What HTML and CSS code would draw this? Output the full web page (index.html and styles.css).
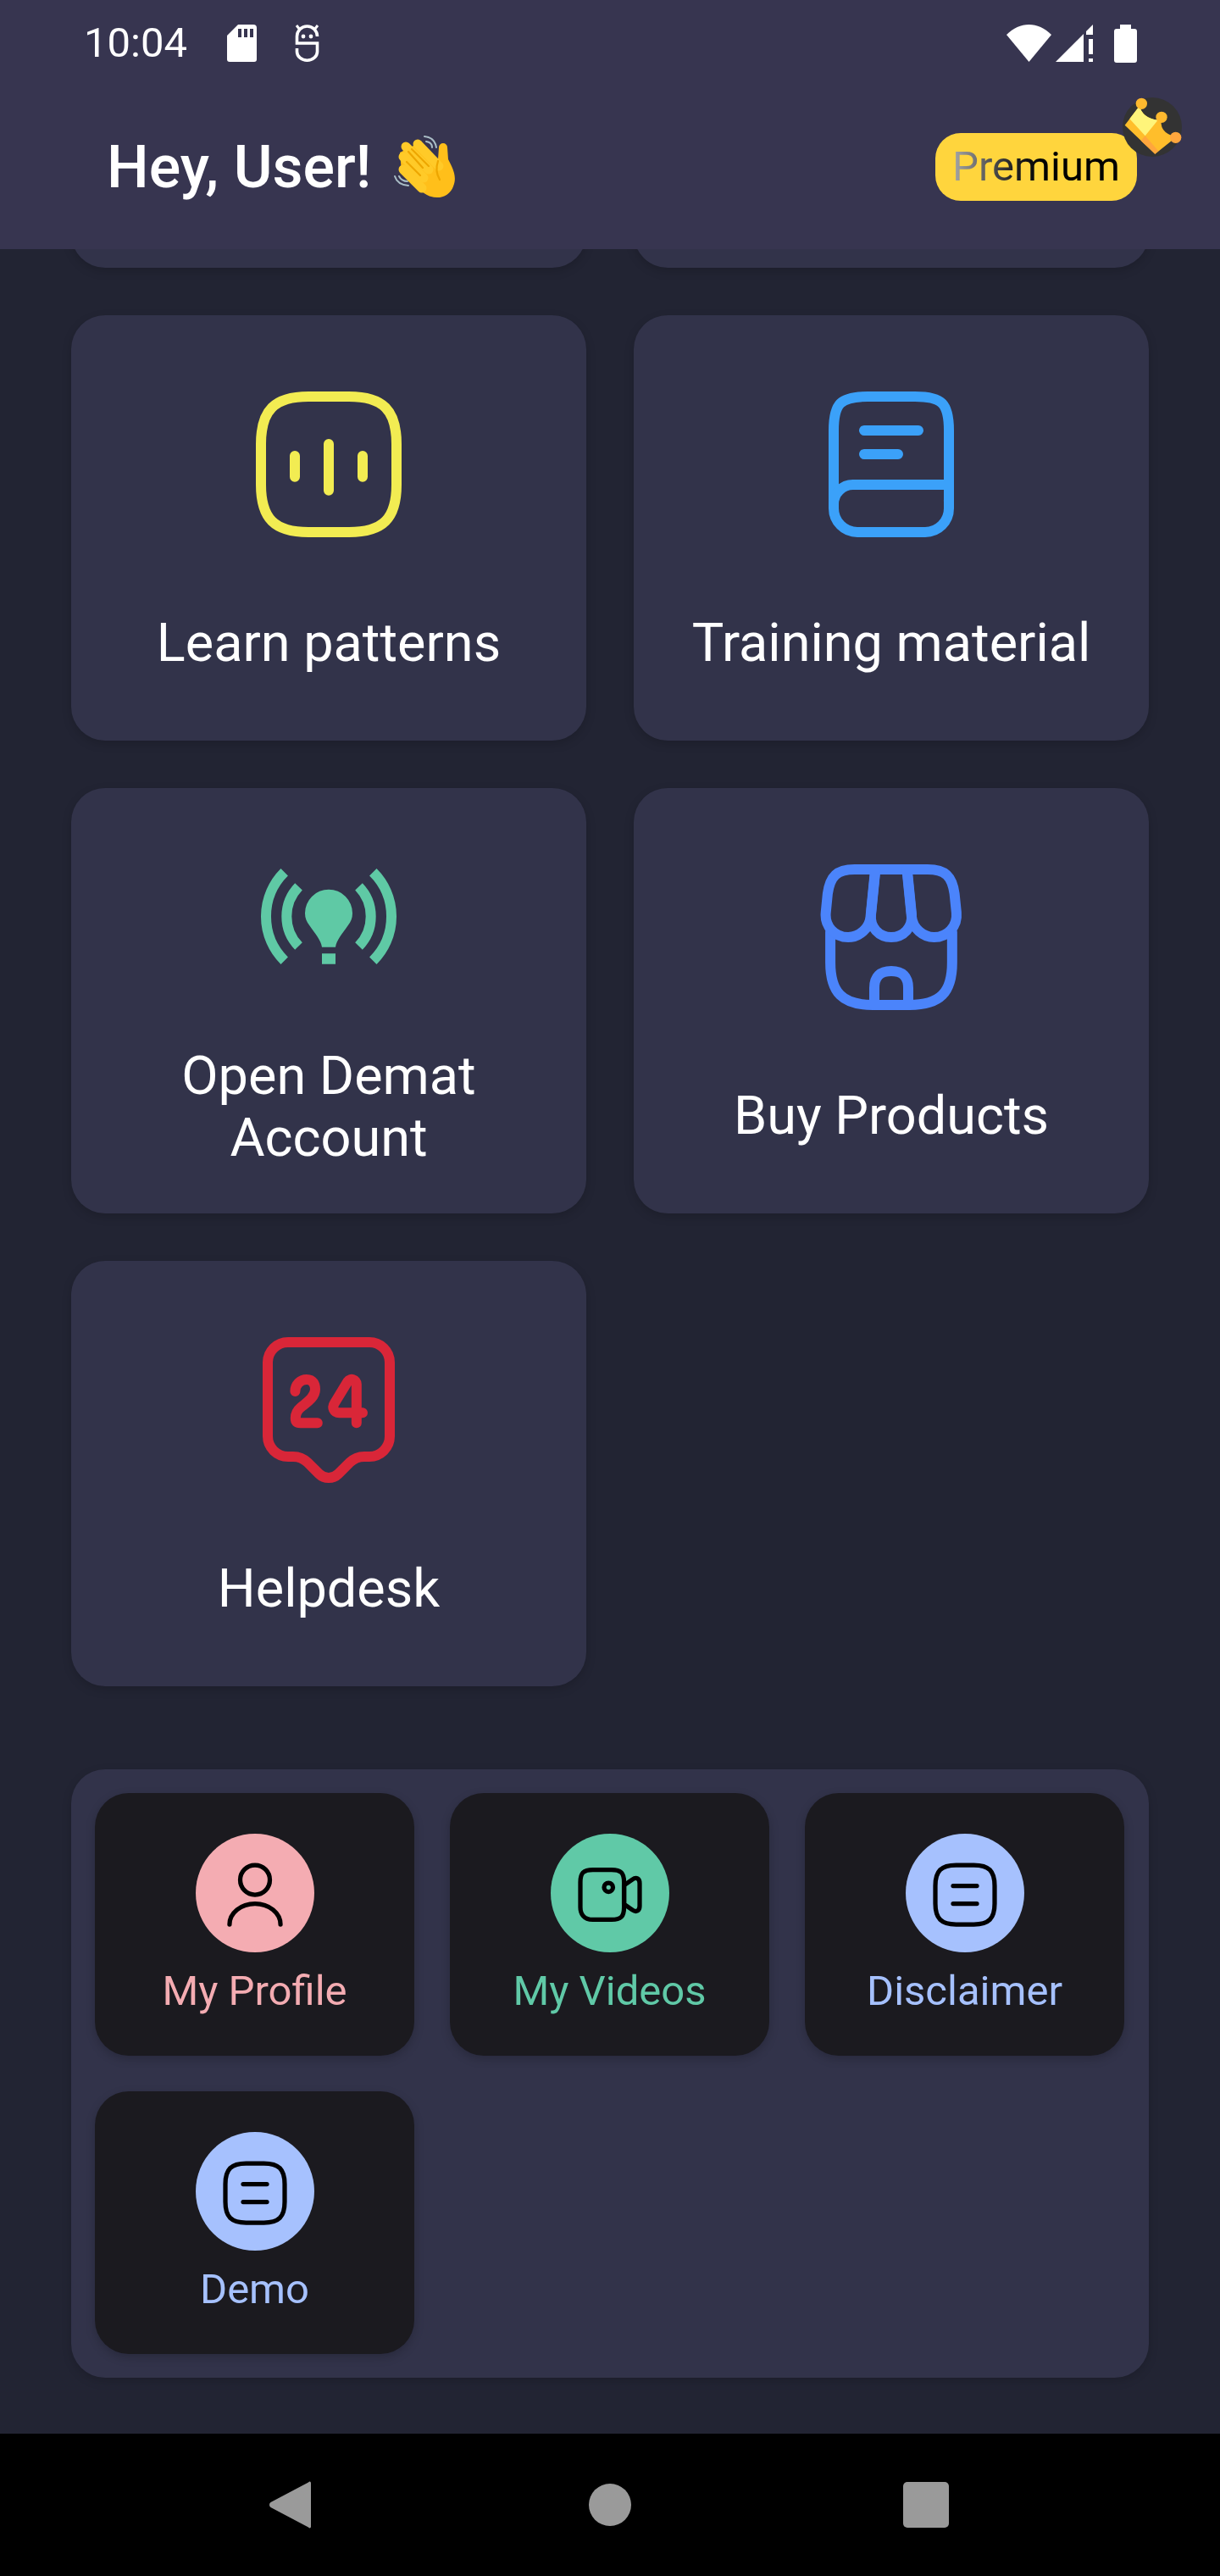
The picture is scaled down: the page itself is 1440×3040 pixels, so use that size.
FILE: index.html
```html
<!DOCTYPE html>
<html lang="en">
<head>
<meta charset="utf-8">
<title>Dashboard</title>
<link rel="stylesheet" href="styles.css">
</head>
<body>
<div class="screen">
  <header class="header">
    <div class="status">
      <div class="status-left">
        <span class="time">10:04</span>
        <svg class="st-sd" viewBox="0 0 35 44"><path d="M13 0H31a4 4 0 0 1 4 4V41a3 3 0 0 1-3 3H3a3 3 0 0 1-3-3V13z" fill="#fff"/><path d="M13 5h4v10h-4zM20 5h4v10h-4zM27 5h4v10h-4z" fill="#373550"/></svg>
        <svg class="st-bug" viewBox="0 0 31 44" fill="none" stroke="#fff" stroke-width="3.6"><path d="M27.5 14A12 12 0 0 0 3.5 14V22H27.5V32A12 10.2 0 0 1 3.5 32V28"/><path d="M3 1l4 5M28 1l-4 5" stroke-width="3"/><circle cx="11" cy="14" r="2.4" fill="#fff" stroke="none"/><circle cx="20" cy="14" r="2.4" fill="#fff" stroke="none"/></svg>
      </div>
      <div class="status-right">
        <svg class="st-wifi" viewBox="0 0 53 44"><path d="M0 12C8 4 17 0 26.5 0S45 4 53 12L26.5 44Z" fill="#fff"/></svg>
        <svg class="st-signal" viewBox="0 0 44 44"><path d="M0 44L33 11V44ZM36 8L44 0V12H36ZM39 17h5v18h-5zM39 40h5v4h-5z" fill="#fff"/></svg>
        <svg class="st-batt" viewBox="0 0 27 45"><path d="M7 0H20V5H24a3 3 0 0 1 3 3V42a3 3 0 0 1-3 3H3a3 3 0 0 1-3-3V8a3 3 0 0 1 3-3H7Z" fill="#fff"/></svg>
      </div>
    </div>
    <div class="hello">
      <div class="greet">
        <h1 class="greet-text">Hey, User!</h1>
        <svg class="wave" viewBox="44 40 76 76" fill="none">
          <g stroke="#A9BDC6" stroke-width="2" stroke-linecap="round">
            <path d="M81 41Q93 42 95 54"/><path d="M83 47Q90 48 90 54"/>
            <path d="M46 88Q49 98 62 99"/><path d="M51 88Q54 94 61 94"/>
          </g>
          <path d="M54 83L78 106C92 118 110 114 115 100C120 88 114 78 109 68L108 54A5 5 0 0 0 98 54L97 68L76 48L52 60Z" fill="#FFBF1A"/>
          <g stroke="#FFCA28" stroke-width="11" stroke-linecap="round">
            <path d="M59 53L86 80"/><path d="M73 50L98 76"/><path d="M56 65L80 90"/><path d="M56 80L78 102"/>
          </g>
          <g stroke="#EDA600" stroke-width="2.2" stroke-linecap="round">
            <path d="M66 56L86 76"/><path d="M60 71L76 87"/><path d="M62 59L79 78"/><path d="M97 70Q93 82 99 92"/>
          </g>
        </svg>
      </div>
      <div class="badge">
        <span class="badge-text">Premium</span>
        <svg class="crown" viewBox="735 42 210 210">
          <circle cx="840" cy="147" r="105" fill="#333"/>
          <path d="M743 140L795 72Q805 115 860 122L875 110Q858 165 925 182L850 242Z" fill="#FFBE2B"/>
          <path d="M760 118L795 72Q805 115 860 122L815 178Z" fill="#FFF47A"/>
          <path d="M815 178L800 195L850 242L862 232Z" fill="#FFA63D"/>
          <circle cx="802" cy="64" r="20" fill="#FFB92E"/>
          <circle cx="873" cy="112" r="20" fill="#FFB92E"/>
          <circle cx="923" cy="184" r="20" fill="#FFA63D"/>
        </svg>
      </div>
    </div>
  </header>

  <main class="main">
    <div class="grid">
      <div class="card card-stub"></div>
      <div class="card card-stub"></div>

      <a class="card">
        <svg class="ic" viewBox="0 0 24 24" fill="none" stroke="#F2EC52" stroke-width="1.5" stroke-linecap="round" stroke-linejoin="round"><path d="M9 22h6c5 0 7-2 7-7V9c0-5-2-7-7-7H9C4 2 2 4 2 9v6c0 5 2 7 7 7z"/><path d="M7 10.75v3.1M12 9v6.85M17 10.75v3.1"/></svg>
        <span class="card-label">Learn patterns</span>
      </a>
      <a class="card">
        <svg class="ic" viewBox="0 0 24 24" fill="none" stroke="#3BA1F9" stroke-width="1.5" stroke-linecap="round" stroke-linejoin="round"><path d="M3.5 18V7c0-4 1-5 5-5h7c4 0 5 1 5 5v10c0 .14 0 .28-.01.42"/><path d="M6.35 15H20.5v3.5c0 1.93-1.57 3.5-3.5 3.5H7c-1.93 0-3.5-1.57-3.5-3.5v-.65C3.5 16.28 4.78 15 6.35 15z"/><path d="M8 7h8M8 10.5h5"/></svg>
        <span class="card-label">Training material</span>
      </a>

      <a class="card">
        <svg class="ic ic-short" viewBox="12 -18 192 172" fill="none" stroke="#5FC9A5" stroke-width="12"><path d="M55.7 28.3A73.6 73.6 0 0 0 55.7 132.7M72.5 45.3A50.5 50.5 0 0 0 72.5 115.5M160.3 28.3A73.6 73.6 0 0 1 160.3 132.7M143.5 45.3A50.5 50.5 0 0 1 143.5 115.5"/><path d="M100 116.7c-1-8-8-16-15-26-3-4-5-8-5-14a28 28 0 0 1 56 0c0 6-2 10-5 14-7 10-14 18-15 26zM100 124.3h16v12.4h-16z" fill="#5FC9A5" stroke="none"/></svg>
        <span class="card-label">Open Demat Account</span>
      </a>
      <a class="card">
        <svg class="ic" viewBox="0 0 24 24" fill="none" stroke="#4B84FB" stroke-width="1.5" stroke-linecap="round" stroke-linejoin="round"><path d="M3.01 11.22v4.49C3.01 20.2 4.81 22 9.3 22h5.39c4.49 0 6.29-1.8 6.29-6.29v-4.49"/><path d="M12 12c1.83 0 3.18-1.49 3-3.32L14.34 2H9.67L9 8.68C8.82 10.51 10.17 12 12 12z"/><path d="M18.31 12c2.02 0 3.5-1.64 3.3-3.65l-.28-2.75C20.97 3 19.97 2 17.35 2h-3.05l.7 7.01c.17 1.65 1.66 2.99 3.31 2.99z"/><path d="M5.64 12c1.65 0 3.14-1.34 3.3-2.99l.22-2.21.48-4.8H6.59C3.97 2 2.97 3 2.61 5.6l-.27 2.75C2.14 10.36 3.62 12 5.64 12z"/><path d="M12 17c-1.67 0-2.5.83-2.5 2.5V22h5v-2.5c0-1.67-.83-2.5-2.5-2.5z"/></svg>
        <span class="card-label">Buy Products</span>
      </a>

      <a class="card">
        <svg class="ic" viewBox="0 0 24 24" fill="none" stroke="#D92638" stroke-width="1.5" stroke-linecap="round" stroke-linejoin="round"><path d="M18 18.86h-.76c-.8 0-1.56.31-2.12.87l-1.71 1.69c-.78.77-2.05.77-2.83 0l-1.71-1.69c-.56-.56-1.33-.87-2.12-.87H6c-1.66 0-3-1.33-3-2.97V4.98C3 3.34 4.34 2 6 2h12c1.66 0 3 1.34 3 2.98v10.91c0 1.64-1.34 2.97-3 2.97z"/><path d="M7.05 9.25C7.05 8.25 7.8 7.5 8.75 7.5C9.7 7.5 10 8.2 10 8.95C10 10.2 8.6 11 7.9 11.6C7.3 12.1 7.1 12.5 7.1 13.2C7.1 13.7 7.3 13.9 7.8 13.9H10.35"/><path d="M16.1 13.9V8.2c0-.7-.9-1-1.3-.4L12.85 11c-.4.65-.1 1.4.7 1.4H17"/></svg>
        <span class="card-label">Helpdesk</span>
      </a>
    </div>

    <section class="panel">
      <a class="tile tile-pink">
        <span class="disc"><svg class="ic-sm" viewBox="0 0 24 24" fill="none" stroke="#000" stroke-width="1.5" stroke-linecap="round" stroke-linejoin="round"><circle cx="12" cy="7" r="5"/><path d="M20.59 22c0-3.87-3.85-7-8.59-7s-8.59 3.13-8.59 7"/></svg></span>
        <span class="tile-label">My Profile</span>
      </a>
      <a class="tile tile-green">
        <span class="disc"><svg class="ic-sm" viewBox="0 0 24 24" fill="none" stroke="#000" stroke-width="1.5" stroke-linecap="round" stroke-linejoin="round"><path d="M12.53 20.42H6.21c-3.16 0-4.21-2.1-4.21-4.21V7.79c0-3.16 1.05-4.21 4.21-4.21h6.32c3.16 0 4.21 1.05 4.21 4.21v8.42c0 3.16-1.06 4.21-4.21 4.21z"/><path d="M19.52 17.1l-2.78-1.95V8.84l2.78-1.95c1.36-.95 2.48-.37 2.48 1.3v7.62c0 1.67-1.12 2.25-2.48 1.29z"/><circle cx="11.5" cy="9.5" r="1.5"/></svg></span>
        <span class="tile-label">My Videos</span>
      </a>
      <a class="tile tile-blue">
        <span class="disc"><svg class="ic-sm" viewBox="0 0 24 24" fill="none" stroke="#000" stroke-width="1.5" stroke-linecap="round" stroke-linejoin="round"><path d="M9 22h6c5 0 7-2 7-7V9c0-5-2-7-7-7H9C4 2 2 4 2 9v6c0 5 2 7 7 7z"/><path d="M8 9h8M8 15h8"/></svg></span>
        <span class="tile-label">Disclaimer</span>
      </a>
      <a class="tile tile-blue">
        <span class="disc"><svg class="ic-sm" viewBox="0 0 24 24" fill="none" stroke="#000" stroke-width="1.5" stroke-linecap="round" stroke-linejoin="round"><path d="M9 22h6c5 0 7-2 7-7V9c0-5-2-7-7-7H9C4 2 2 4 2 9v6c0 5 2 7 7 7z"/><path d="M8 9h8M8 15h8"/></svg></span>
        <span class="tile-label">Demo</span>
      </a>
    </section>
  </main>

  <nav class="navbar">
    <svg class="nav-back" viewBox="0 0 49 56"><path d="M46 1.500C47.500-.3 49 .5 49 2.500V53.500C49 55.500 47.500 56.300 46 54.500L1.500 31C-.5 29.500-.5 26.500 1.500 25Z" fill="#9a9a9a"/></svg>
    <span class="nav-home"></span>
    <span class="nav-recent"></span>
  </nav>
</div>
</body>
</html>
```

FILE: styles.css
```css
* { box-sizing: border-box; }
html, body { margin: 0; padding: 0; background: #222433; }
body { font-family: Roboto, "Liberation Sans", sans-serif; color: #fff; }
h1 { margin: 0; font: inherit; }
svg { display: block; }

.screen { width: 1440px; height: 3040px; display: flex; flex-direction: column; overflow: hidden; }

/* Header */
.header { height: 294px; flex: none; padding-top: 28px; background: #373550; position: relative; z-index: 2; }
.status { display: flex; justify-content: space-between; align-items: center; height: 46px; padding: 0 98px 0 99px; }
.status-left, .status-right { display: flex; align-items: center; }
.time { font-size: 49px; line-height: 46px; width: 169px; }
.st-sd { width: 35px; height: 44px; }
.st-bug { width: 31px; height: 44px; margin-left: 44px; }
.st-wifi { width: 53px; height: 44px; }
.st-signal { width: 44px; height: 44px; margin-left: 5px; }
.st-batt { width: 27px; height: 45px; margin-left: 25px; }

.hello { display: flex; justify-content: space-between; align-items: center; margin-top: 82px; padding: 0 98px 0 126px; }
.greet { display: flex; align-items: center; }
.greet-text { font-size: 70px; font-weight: 500; line-height: 82px; white-space: nowrap; }
.wave { width: 76px; height: 76px; margin-left: 26px; margin-top: 2px; }

.badge { position: relative; width: 238px; height: 80px; border-radius: 30px; background: #FFD53D; display: flex; align-items: center; justify-content: center; }
.badge-text { font-size: 49px; line-height: 58px; background: linear-gradient(90deg, #a8a8a8 0%, #222 36%, #000 55%); -webkit-background-clip: text; background-clip: text; color: transparent; }
.crown { position: absolute; left: 221px; top: -42px; width: 70px; height: 70px; }

/* Main */
.main { flex: 1; min-height: 0; overflow: hidden; }
.grid { display: grid; grid-template-columns: 608px 608px; grid-template-rows: 100px; grid-auto-rows: 502px; gap: 56px; padding: 0 84px; margin-top: -78px; }
.card { background: #32334A; border-radius: 40px; box-shadow: 0 4px 12px rgba(0,0,0,.16); display: flex; flex-direction: column; align-items: center; justify-content: center; padding: 0 60px; }
.card-stub { height: 100px; }
.ic { width: 192px; height: 192px; flex: none; }
.ic-short { height: 172px; }
.card-label { margin-top: 78px; font-size: 63px; text-align: center; }

.panel { display: grid; grid-template-columns: repeat(3, 377px); grid-auto-rows: 310px; gap: 42px; margin: 98px 84px 0; padding: 28px; background: #32334A; border-radius: 40px; box-shadow: 0 4px 12px rgba(0,0,0,.16); }
.tile { background: #1B1A1F; border-radius: 40px; box-shadow: 0 4px 12px rgba(0,0,0,.2); display: flex; flex-direction: column; align-items: center; padding-top: 48px; }
.disc { width: 140px; height: 140px; border-radius: 50%; display: flex; align-items: center; justify-content: center; padding-top: 4px; }
.ic-sm { width: 84px; height: 84px; }
.tile-label { margin-top: 17px; font-size: 49px; line-height: 58px; }
.tile-pink .disc { background: #F4ACB2; }
.tile-pink .tile-label { color: #F4ACB2; }
.tile-green .disc { background: #60C9A7; }
.tile-green .tile-label { color: #60C9A7; }
.tile-blue .disc { background: #A6C1FE; }
.tile-blue .tile-label { color: #A6C1FE; }

/* Android nav bar */
.navbar { height: 168px; flex: none; background: #000; display: flex; align-items: center; padding-left: 318px; }
.nav-back { width: 49px; height: 56px; }
.nav-home { width: 50px; height: 50px; margin-left: 328px; border-radius: 50%; background: #9a9a9a; }
.nav-recent { width: 54px; height: 54px; margin-left: 321px; border-radius: 5px; background: #9a9a9a; }
```
